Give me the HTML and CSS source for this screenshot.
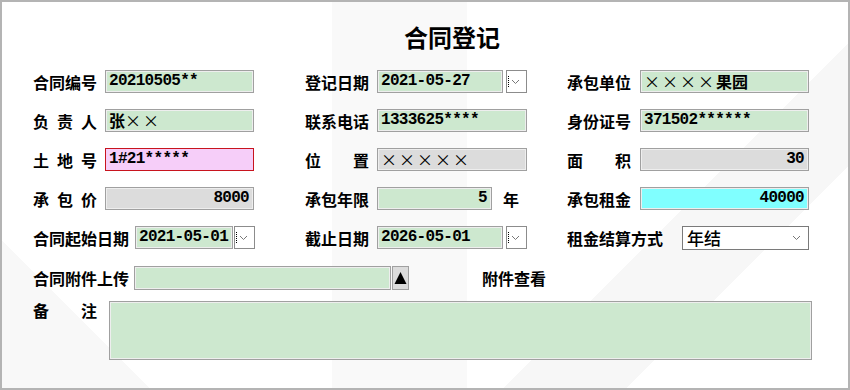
FILE: index.html
```
<!DOCTYPE html>
<html lang="zh-CN">
<head>
    <meta charset="UTF-8">
    <title>合同登记</title>
    <link rel="stylesheet" href="styles.css">
</head>
<body>
    <div class="frame">
        <h1 class="title">合同登记</h1>

        <div class="grid">
            <!-- row 1 -->
            <div class="field">
                <span class="lbl">合同编号</span>
                <div class="box green">20210505**</div>
            </div>
            <div class="field wide2">
                <span class="lbl">登记日期</span>
                <div class="date">
                    <div class="box green">2021-05-27</div>
                    <div class="drop"><i class="dots"></i><svg width="9" height="6" viewBox="0 0 9 6"><polyline points="1,1 4.5,4.5 8,1" fill="none" stroke="#777" stroke-width="1"/></svg></div>
                </div>
            </div>
            <div class="field wide3">
                <span class="lbl">承包单位</span>
                <div class="box green"><span class="x">××××</span><span class="cn">果园</span></div>
            </div>

            <!-- row 2 -->
            <div class="field">
                <span class="lbl">负 责 人</span>
                <div class="box green"><span class="cn">张</span><span class="x">××</span></div>
            </div>
            <div class="field wide2">
                <span class="lbl">联系电话</span>
                <div class="box green">1333625****</div>
            </div>
            <div class="field wide3">
                <span class="lbl">身份证号</span>
                <div class="box green">371502******</div>
            </div>

            <!-- row 3 -->
            <div class="field">
                <span class="lbl">土 地 号</span>
                <div class="box pink">1#21*****</div>
            </div>
            <div class="field wide2">
                <span class="lbl">位 置</span>
                <div class="box gray"><span class="x">×××××</span></div>
            </div>
            <div class="field wide3">
                <span class="lbl">面 积</span>
                <div class="box gray num">30</div>
            </div>

            <!-- row 4 -->
            <div class="field">
                <span class="lbl">承 包 价</span>
                <div class="box gray num">8000</div>
            </div>
            <div class="field wide2">
                <span class="lbl">承包年限</span>
                <div class="box green num">5</div>
                <span class="unit">年</span>
            </div>
            <div class="field wide3">
                <span class="lbl">承包租金</span>
                <div class="box cyan num">40000</div>
            </div>

            <!-- row 5 -->
            <div class="field">
                <span class="lbl auto">合同起始日期</span>
                <div class="date tight">
                    <div class="box green">2021-05-01</div>
                    <div class="drop"><i class="dots"></i><svg width="9" height="6" viewBox="0 0 9 6"><polyline points="1,1 4.5,4.5 8,1" fill="none" stroke="#777" stroke-width="1"/></svg></div>
                </div>
            </div>
            <div class="field wide2">
                <span class="lbl">截止日期</span>
                <div class="date">
                    <div class="box green">2026-05-01</div>
                    <div class="drop"><i class="dots"></i><svg width="9" height="6" viewBox="0 0 9 6"><polyline points="1,1 4.5,4.5 8,1" fill="none" stroke="#777" stroke-width="1"/></svg></div>
                </div>
            </div>
            <div class="field wide3">
                <span class="lbl auto pay">租金结算方式</span>
                <div class="select">
                    <span>年结</span>
                    <svg width="9" height="6" viewBox="0 0 9 6"><polyline points="1,1 4.5,4.5 8,1" fill="none" stroke="#777" stroke-width="1"/></svg>
                </div>
            </div>
        </div>

        <div class="upload-row">
            <span class="lbl auto">合同附件上传</span>
            <div class="box green file"></div>
            <div class="up-btn"><svg width="13" height="14" viewBox="0 0 13 14"><polygon points="6.5,1 12.5,13 0.5,13" fill="#000"/></svg></div>
            <span class="view">附件查看</span>
        </div>

        <div class="note-row">
            <span class="lbl">备 注</span>
            <div class="box green note"></div>
        </div>
    </div>
</body>
</html>
```

FILE: styles.css
```
body {
    margin: 0;
    font-family: "Noto Sans CJK SC", sans-serif;
    color: #000;
}
.frame {
    width: 850px;
    height: 390px;
    box-sizing: border-box;
    border: 2px solid #b4b4b4;
    background-color: #fff;
    /* faint geometric watermark */
    background-image:
        linear-gradient(90deg, transparent 39%, #f9f9f9 39%, #f9f9f9 55%, transparent 55%),
        linear-gradient(135deg, transparent 72%, #f7f7f7 72%, #f7f7f7 82%, transparent 82%),
        linear-gradient(45deg, #f8f8f8 12%, transparent 12%);
    padding-left: 31px;
    overflow: hidden;
}
.title {
    margin: 20px 0 18px 0;
    padding-left: 23px;
    font-size: 24px;
    line-height: 30px;
    font-weight: bold;
    text-align: center;
}
.grid {
    display: grid;
    grid-template-columns: 272px 262px 242px;
    grid-auto-rows: 23px;
    row-gap: 16px;
}
.field {
    display: flex;
    align-items: center;
    width: 221px;
}
.field.wide2 {
    width: 222px;
}
.field.wide3 {
    width: 242px;
}
.lbl {
    flex: none;
    width: 64px;
    margin-right: 8px;
    font-size: 16px;
    font-weight: bold;
    line-height: 18px;
    text-align: justify;
    text-align-last: justify;
    white-space: nowrap;
}
.wide3 .lbl {
    margin-right: 9px;
}
.lbl.auto {
    width: auto;
    text-align-last: auto;
    margin-right: 6px;
}
.lbl.pay {
    margin-right: 19px;
}
.box {
    flex: 1;
    min-width: 0;
    height: 23px;
    box-sizing: border-box;
    border: 1px solid #a0a0a0;
    box-shadow: inset 0 0 0 1px #eeeeee;
    padding: 0 4px 0 3px;
    font-family: "Liberation Mono", "Noto Sans CJK SC", monospace;
    font-size: 16px;
    letter-spacing: -0.7px;
    font-weight: bold;
    line-height: 21px;
    white-space: nowrap;
    overflow: hidden;
}
.green {
    background-color: #cde8cf;
}
.pink {
    background-color: #f6cef9;
    border-color: #c8141e;
    box-shadow: none;
}
.gray {
    background-color: #dcdcdc;
}
.cyan {
    background-color: #80ffff;
}
.num {
    text-align: right;
}
.x {
    font-family: "Noto Sans CJK SC", sans-serif;
    font-weight: normal;
    font-size: 16px;
    letter-spacing: 2px;
}
.cn {
    font-family: "Noto Sans CJK SC", sans-serif;
    font-size: 16px;
    letter-spacing: 0;
}
.unit {
    flex: none;
    margin: 0 8px 0 11px;
    font-size: 16px;
    font-weight: bold;
}
.date {
    flex: 1;
    display: flex;
    gap: 3px;
    height: 23px;
}
.date.tight {
    gap: 1px;
}
.drop {
    flex: none;
    width: 21px;
    height: 23px;
    box-sizing: border-box;
    border: 1px solid #8c8c8c;
    background: #fff;
    display: flex;
    align-items: center;
    padding-left: 1px;
    gap: 2px;
}
.dots {
    display: block;
    width: 0;
    height: 11px;
    border-left: 1px dotted #000;
}
.select {
    flex: 1;
    height: 24px;
    box-sizing: border-box;
    border: 1px solid #7a7a7a;
    background: #fff;
    display: flex;
    align-items: center;
    justify-content: space-between;
    padding: 0 7px 0 4px;
    font-size: 17px;
    font-weight: 500;
}
.upload-row {
    display: flex;
    align-items: center;
    margin-top: 17px;
    height: 24px;
}
.upload-row .lbl.auto {
    margin-right: 5px;
}
.file {
    flex: none;
    width: 257px;
    height: 24px;
}
.up-btn {
    flex: none;
    width: 17px;
    height: 24px;
    margin-left: 1px;
    box-sizing: border-box;
    border: 1px solid #a0a0a0;
    background: #dcdcdc;
    display: flex;
    align-items: center;
    justify-content: center;
}
.view {
    margin-left: 73px;
    font-size: 16px;
    font-weight: bold;
}
.note-row {
    display: flex;
    align-items: flex-start;
    margin-top: 11px;
}
.note-row .lbl {
    margin-right: 12px;
}
.note {
    flex: none;
    width: 703px;
    height: 59px;
}
```
